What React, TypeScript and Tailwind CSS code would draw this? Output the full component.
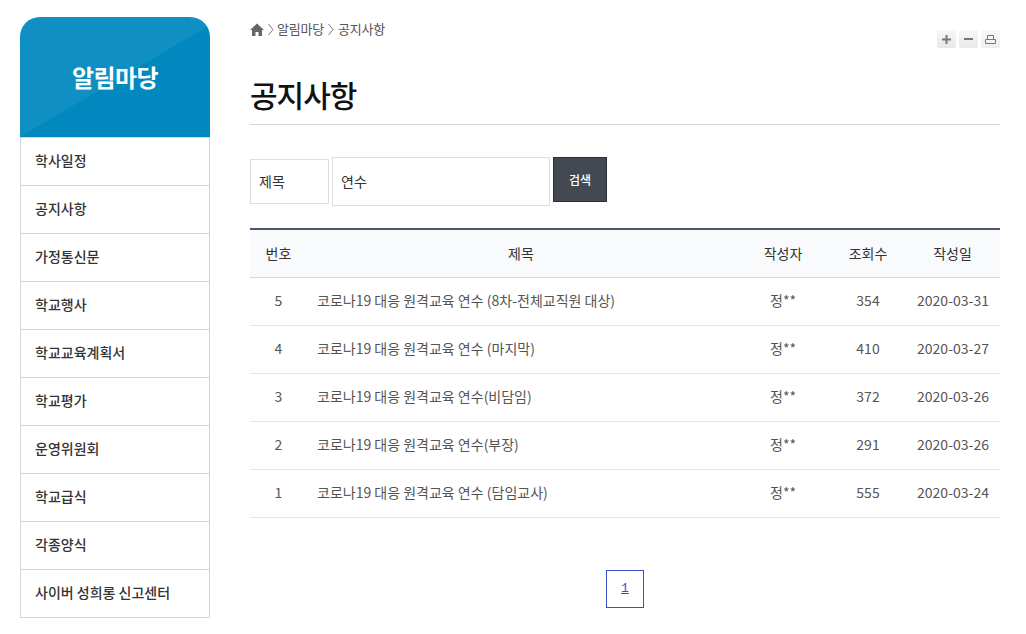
const font = { fontFamily: '"Noto Sans CJK KR", "Noto Sans", sans-serif' };

const menus = ["학사일정", "공지사항", "가정통신문", "학교행사", "학교교육계획서", "학교평가", "운영위원회", "학교급식", "각종양식", "사이버 성희롱 신고센터"];

const rows = [
  { no: 5, title: "코로나19 대응 원격교육 연수 (8차-전체교직원 대상)", views: 354, date: "2020-03-31" },
  { no: 4, title: "코로나19 대응 원격교육 연수 (마지막)", views: 410, date: "2020-03-27" },
  { no: 3, title: "코로나19 대응 원격교육 연수(비담임)", views: 372, date: "2020-03-26" },
  { no: 2, title: "코로나19 대응 원격교육 연수(부장)", views: 291, date: "2020-03-26" },
  { no: 1, title: "코로나19 대응 원격교육 연수 (담임교사)", views: 555, date: "2020-03-24" },
];

const Chevron = () => (
  <svg width="6" height="13" viewBox="0 0 6 13" fill="none" stroke="#777" strokeWidth="1">
    <path d="M0.5 1 L5 6.5 L0.5 12" />
  </svg>
);

const App = () => {
  return (
    <div className="flex w-[1026px] h-[634px] overflow-hidden bg-white" style={font}>
      {/* Sidebar */}
      <aside className="w-[190px] ml-5 mt-[17px] shrink-0">
        <div className="relative h-[120px] rounded-t-[20px] overflow-hidden bg-[#0088bf] flex items-center justify-center">
          <svg className="absolute inset-0" width="190" height="120" viewBox="0 0 190 120">
            <polygon points="0,0 190,0 190,8 0,120" fill="#ffffff" fillOpacity="0.06" />
          </svg>
          <h2 className="relative text-[24px] font-bold text-white tracking-[-0.6px]">알림마당</h2>
        </div>
        <ul className="border-x border-t border-[#d5d5d5]">
          {menus.map((m) => (
            <li key={m} className="h-[48px] flex items-center pl-[14px] pb-[2px] border-b border-[#d5d5d5] text-[14px] font-medium text-[#333]">
              {m}
            </li>
          ))}
        </ul>
      </aside>

      {/* Content */}
      <main className="w-[750px] ml-10 shrink-0">
        <div className="flex justify-between h-[48px]">
          <div className="flex items-center gap-[4px] h-[24px] mt-[17px] text-[13px] tracking-[-0.2px] text-[#555]">
            <svg width="14" height="13" viewBox="0 0 14 13" fill="#666">
              <path d="M7 0.5 L14 7 L12 7 L12 13 L8.5 13 L8.5 9 L5.5 9 L5.5 13 L2 13 L2 7 L0 7 Z" />
            </svg>
            <Chevron />
            <span className="-ml-px">알림마당</span>
            <Chevron />
            <span>공지사항</span>
          </div>
          <div className="flex gap-[3px] mt-[30px] h-[18px]">
            <button className="w-[19px] h-[18px] flex items-center justify-center rounded-[2px] bg-gradient-to-b from-[#f8f8f8] to-[#e8e8e8]">
              <svg width="9" height="9" viewBox="0 0 9 9" fill="#777"><path d="M3.5 0h2v3.5H9v2H5.5V9h-2V5.5H0v-2h3.5z" /></svg>
            </button>
            <button className="w-[19px] h-[18px] flex items-center justify-center rounded-[2px] bg-gradient-to-b from-[#f8f8f8] to-[#e8e8e8]">
              <svg width="9" height="3" viewBox="0 0 9 3" fill="#777"><rect width="9" height="2" /></svg>
            </button>
            <button className="w-[19px] h-[18px] flex items-center justify-center rounded-[2px] bg-gradient-to-b from-[#f8f8f8] to-[#eeeeee]">
              <svg width="11" height="9" viewBox="0 0 11 9" fill="none" stroke="#777" strokeWidth="1">
                <path d="M2.5 4.5V0.5h6v4M0.5 4.5h10v4h-10z" />
              </svg>
            </button>
          </div>
        </div>

        <h1 className="h-[77px] pt-[24px] border-b border-[#d5d5d5] text-[30px] leading-[44px] font-medium text-[#111] tracking-[-1px] mt-0">공지사항</h1>

        {/* Search */}
        <form className="flex items-start mt-[32px]">
          <div className="w-[79px] h-[45px] mt-[2px] border border-[#ddd] flex items-center pl-2 text-[14px] text-[#333]">제목</div>
          <div className="w-[218px] h-[49px] ml-[3px] border border-[#ddd] flex items-center pl-2 text-[14px] text-[#333]">연수</div>
          <button type="button" className="w-[54px] h-[45px] ml-[3px] bg-[#434853] border border-[#2b2e36] text-white text-[12px] font-medium">검색</button>
        </form>

        {/* Table */}
        <table className="w-[750px] mt-[22px] table-fixed border-collapse border-t-2 border-[#4d5470] text-[14px]">
          <thead>
            <tr className="h-[48px] bg-[#f9fafb] border-b border-[#d5d9e2] text-[#333]">
              <th className="w-[57px] font-normal">번호</th>
              <th className="font-normal">제목</th>
              <th className="w-[96px] font-normal">작성자</th>
              <th className="w-[74px] font-normal">조회수</th>
              <th className="w-[95px] font-normal">작성일</th>
            </tr>
          </thead>
          <tbody className="text-[#555]">
            {rows.map((r) => (
              <tr key={r.no} className="h-[48px] border-b border-[#e5e5e5]">
                <td className="text-center pb-[2px]">{r.no}</td>
                <td className="pl-[10px] pb-[2px]">{r.title}</td>
                <td className="text-center pb-[2px]">정**</td>
                <td className="text-center pb-[2px]">{r.views}</td>
                <td className="text-center pb-[2px] pl-px">{r.date}</td>
              </tr>
            ))}
          </tbody>
        </table>

        {/* Pagination */}
        <div className="flex justify-center mt-[52px]">
          <a className="w-[38px] h-[38px] flex items-center justify-center border border-[#3b4fc4] text-[#3b4fc4] text-[13px] underline" style={{ fontFamily: '"Liberation Mono", monospace' }}>1</a>
        </div>
      </main>
    </div>
  );
};

export default App;
